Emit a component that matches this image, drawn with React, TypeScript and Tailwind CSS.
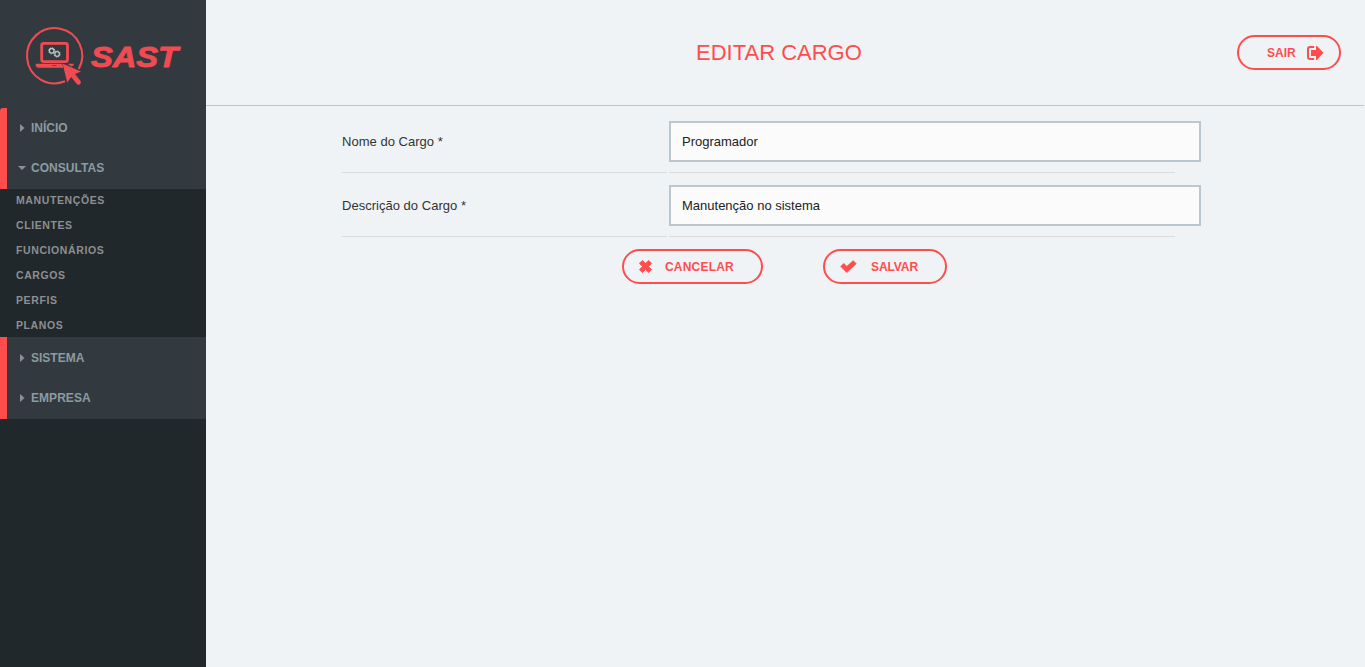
import type { ReactNode } from "react";

const Logo = () => (
  <svg width="206" height="108" viewBox="0 0 206 108" role="img" aria-label="SAST">
    <g fill="none" stroke="#f14b52">
      <path d="M65 81.3 A27.6 27.6 0 1 1 78.8 69" strokeWidth="2.1" />
      <rect x="41.7" y="43.4" width="25.8" height="18.2" rx="2" strokeWidth="2.8" />
    </g>
    <path d="M35.6 63.8H62l1.4 4H38.5q-2.9 0-2.9-4z" fill="#f14b52" />
    <path d="M67.3 63.8h6.6q0 2.2-2.4 2.6z" fill="#f14b52" />
    <path d="M52 65.5h4.5" stroke="#7b4247" strokeWidth="1" />
    <path d="M62.6 63.4l18.4 8-6 2.6 5.9 7.6q.4 1.6-1.2 2.8-1.8.9-2.9-.3l-5.6-7.2-4 5.7z" fill="#f14b52" />
    <g fill="none" stroke="#c1c5c8">
      <circle cx="51.7" cy="50.8" r="2.3" strokeWidth="1.3" />
      <circle cx="57.1" cy="54" r="2.3" strokeWidth="1.3" />
      <circle cx="51.7" cy="50.8" r="3.2" strokeWidth=".8" strokeDasharray="1.2 1.3" />
      <circle cx="57.1" cy="54" r="3.2" strokeWidth=".8" strokeDasharray="1.2 1.3" />
    </g>
    <text
      x="91"
      y="66.6"
      textLength="87"
      lengthAdjust="spacingAndGlyphs"
      className="fill-[#f14b52] font-['Liberation_Sans',sans-serif] text-[29px] font-bold italic"
      stroke="#f14b52"
      strokeWidth=".9"
      strokeLinejoin="round"
    >
      SAST
    </text>
  </svg>
);

const NavItem = ({ open, spacing, children }: { open?: boolean; spacing: string; children: ReactNode }) => (
  <a className="flex h-10 items-center text-[12px] font-bold text-[#8c9ba0]">
    <span className="flex w-6 justify-center pl-1.5">
      {open ? (
        <svg width="8" height="8" viewBox="0 0 8 8"><path d="M0 2h8L4 6z" fill="#928f93" /></svg>
      ) : (
        <svg width="8" height="8" viewBox="0 0 8 8"><path d="M2 0v8l4.5-4z" fill="#928f93" /></svg>
      )}
    </span>
    <span className={spacing}>{children}</span>
  </a>
);

const submenu = ["MANUTENÇÕES", "CLIENTES", "FUNCIONÁRIOS", "CARGOS", "PERFIS", "PLANOS"];

const Field = ({ label, value }: { label: string; value: string }) => (
  <div className="flex h-16 gap-[2px] text-[13px] text-[#333]">
    <div className="flex h-[52px] w-[325px] items-center border-b border-[#dadcde] pb-[9px]">
      <div className="tracking-[0.02px]">{label}</div>
    </div>
    <div className="h-[52px] w-[506px] border-b border-[#dadcde]">
      <input
        defaultValue={value}
        className="h-[41px] w-[532px] border-2 border-[#bbc6ce] bg-[#fbfbfb] px-[11px] tracking-[0px] text-[#222] outline-none"
      />
    </div>
  </div>
);

export default function App() {
  return (
    <div className="flex h-[667px] w-[1365px] overflow-hidden bg-[#eff3f6] font-['Liberation_Sans',Arial,sans-serif]">
      <aside className="w-[206px] shrink-0 bg-[#21282b]">
        <div className="h-[108px] bg-[#323a40]"><Logo /></div>
        <div className="bg-[#323a40]">
          <div className="h-[81px] rounded-tl-[3px] border-l-[7px] border-[#ff4d4d]">
            <NavItem spacing="tracking-[0px]">INÍCIO</NavItem>
            <NavItem open spacing="tracking-[0.05px]">CONSULTAS</NavItem>
          </div>
        </div>
        <div className="h-[148px] pl-4 text-[10.5px] leading-[23px] font-bold tracking-[0.6px] text-[#8d8f91]">
          {submenu.map((item) => <div key={item} className="h-[25px]">{item}</div>)}
        </div>
        <div className="h-[82px] border-l-[7px] border-[#ff4d4d] bg-[#323a40] pt-px">
          <NavItem spacing="tracking-[0px]">SISTEMA</NavItem>
          <NavItem spacing="tracking-[0.05px]">EMPRESA</NavItem>
        </div>
      </aside>
      <main className="flex-1">
        <header className="mr-px flex h-[106px] items-start border-b border-[#bbc6ce] pr-[23px]">
          <h1 className="mt-9 ml-[490px] w-[541px] text-[22px] leading-[34px] text-[#ff4d4d]">EDITAR CARGO</h1>
          <button className="mt-[35px] flex h-[35px] w-[104px] items-center rounded-[18px] border-2 border-[#ff4d4d] pl-7 text-left text-[12px] font-bold text-[#ff4d4d]">
            <span className="w-10">SAIR</span>
            <svg width="17" height="14" viewBox="0 0 17 14">
              <path d="M7.2 1H3Q1 1 1 3v8q0 2 2 2h4.2" fill="none" stroke="#ff4d4d" strokeWidth="2" />
              <path d="M4 4h5V0h1l6.5 6.8L10 14H9v-4H4z" fill="#ff4d4d" />
            </svg>
          </button>
        </header>
        <form className="mt-[15px] ml-[136px]">
          <Field label="Nome do Cargo *" value="Programador" />
          <Field label="Descrição do Cargo *" value="Manutenção no sistema" />
          <div className="ml-[280px] flex gap-[60px] text-[12px] font-bold text-[#ff4d4d]">
            <button type="button" className="flex h-[35px] w-[141px] items-center rounded-[18px] border-2 border-[#ff4d4d] pl-[15px]">
              <svg width="13" height="13" viewBox="0 0 13 13">
                <path d="M3.4.4l3.1 3L9.6.4l3 3-3.1 3.1 3.1 3.1-3 3-3.1-3-3.1 3-3-3 3.1-3.1L.4 3.4z" fill="#ff4d4d" stroke="#ff4d4d" strokeWidth=".8" strokeLinejoin="round" />
              </svg>
              <span className="ml-[13px] tracking-[0.2px]">CANCELAR</span>
            </button>
            <button type="button" className="flex h-[35px] w-[124px] items-center rounded-[18px] border-2 border-[#ff4d4d] pl-[15px]">
              <svg width="17" height="13" viewBox="0 0 17 13">
                <path d="M.8 6.4l3-3 3 3L13.2.7l3 3-9.4 8.8z" fill="#ff4d4d" stroke="#ff4d4d" strokeWidth=".8" strokeLinejoin="round" />
              </svg>
              <span className="ml-[14px] tracking-[-0.1px]">SALVAR</span>
            </button>
          </div>
        </form>
      </main>
    </div>
  );
}
